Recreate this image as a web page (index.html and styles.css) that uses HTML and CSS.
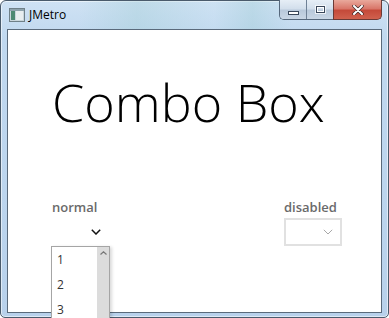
FILE: index.html
```html
<!DOCTYPE html>
<html lang="en">
<head>
    <meta charset="UTF-8">
    <title>JMetro</title>
    <link rel="stylesheet" href="styles.css">
</head>
<body>
    <div class="window">
        <div class="titlebar">
            <svg class="app-icon" width="16" height="14" viewBox="0 0 16 14">
                <rect x="0.5" y="0.5" width="15" height="13" fill="#c9d6dc" stroke="#6f8088"/>
                <rect x="2" y="3" width="4" height="9" fill="#4d8a73"/>
                <rect x="7" y="3" width="7" height="9" fill="#e8eef0"/>
                <rect x="1" y="1" width="14" height="2" fill="#8ea3ad"/>
            </svg>
            <span class="title">JMetro</span>
            <div class="controls">
                <div class="ctl-group">
                    <div class="ctl min"><span class="min-glyph"></span></div>
                    <div class="ctl max"><span class="max-glyph"></span></div>
                </div>
                <div class="ctl close">
                    <svg width="12" height="10" viewBox="0 0 12 10">
                        <path d="M2 1 L10 9 M10 1 L2 9" stroke="#3b2a2a" stroke-width="3.4" stroke-linecap="round"/>
                        <path d="M2 1 L10 9 M10 1 L2 9" stroke="#fff" stroke-width="2" stroke-linecap="round"/>
                    </svg>
                </div>
            </div>
        </div>

        <div class="client">
            <h1 class="heading">Combo Box</h1>

            <div class="combo-row">
                <div class="combo-col">
                    <div class="label">normal</div>
                    <div class="combo">
                        <svg class="chevron" width="10" height="6" viewBox="0 0 10 6">
                            <path d="M0.8 0.8 L5 5 L9.2 0.8" fill="none" stroke="#111" stroke-width="1.5"/>
                        </svg>
                        <div class="popup">
                            <ul class="items">
                                <li>1</li>
                                <li>2</li>
                                <li>3</li>
                            </ul>
                            <div class="scrollbar">
                                <svg width="7" height="4" viewBox="0 0 7 4">
                                    <path d="M0.5 3.5 L3.5 0.8 L6.5 3.5" fill="none" stroke="#777" stroke-width="1.2"/>
                                </svg>
                            </div>
                        </div>
                    </div>
                </div>
                <div class="combo-col">
                    <div class="label">disabled</div>
                    <div class="combo disabled">
                        <svg class="chevron" width="10" height="6" viewBox="0 0 10 6">
                            <path d="M0.8 0.8 L5 5 L9.2 0.8" fill="none" stroke="#a8a8a8" stroke-width="1"/>
                        </svg>
                    </div>
                </div>
            </div>
        </div>
    </div>
</body>
</html>
```

FILE: styles.css
```css
body {
    margin: 0;
    width: 389px;
    height: 318px;
    overflow: hidden;
    font-family: "Open Sans", "Noto Sans", sans-serif;
    background: #fff;
}
.window {
    position: relative;
    box-sizing: border-box;
    height: 318px;
    display: flex;
    flex-direction: column;
    border: 1px solid #4a5b6c;
    border-radius: 6px 6px 5px 5px;
    background: linear-gradient(to bottom, #cfe2f4 0%, #c0d8ef 12%, #bcd5ee 60%, #b8d1eb 100%);
    box-shadow: inset 0 0 0 1px rgba(255, 255, 255, 0.55);
}
.titlebar {
    height: 28px;
    display: flex;
    align-items: center;
    padding-left: 8px;
    background: linear-gradient(to right, rgba(210, 230, 240, 0) 20%, rgba(160, 205, 210, 0.35) 35%, rgba(200, 225, 240, 0.2) 55%, rgba(150, 200, 205, 0.3) 65%, rgba(210, 230, 245, 0) 75%);
    border-radius: 5px 5px 0 0;
}
.app-icon {
    margin-top: -1px;
}
.title {
    font-size: 12px;
    color: #000;
    margin-left: 4px;
    margin-top: -1px;
}
.controls {
    margin-left: auto;
    margin-right: 6px;
    align-self: flex-start;
    margin-top: -1px;
    display: flex;
    height: 20px;
}
.ctl-group {
    display: flex;
    border: 1px solid #56687c;
    border-top: none;
    border-right: none;
    border-radius: 0 0 0 5px;
    overflow: hidden;
}
.ctl {
    display: flex;
    align-items: center;
    justify-content: center;
    height: 19px;
}
.min, .max {
    width: 26px;
    background: linear-gradient(to bottom, #e6eef6 0%, #d3dfec 45%, #b9c9db 55%, #c9d6e5 100%);
}
.min {
    border-right: 1px solid #6f8196;
}
.min-glyph {
    width: 9px;
    height: 2px;
    margin-top: 6px;
    background: #fff;
    border: 1px solid #39475a;
}
.max-glyph {
    width: 7px;
    height: 5px;
    border: 1px solid #39475a;
    box-shadow: inset 0 0 0 1px #fff, 0 0 0 1px rgba(255, 255, 255, 0.7);
}
.close {
    width: 47px;
    background: linear-gradient(to bottom, #e9a99c 0%, #d9776a 45%, #c54a3a 55%, #d0614e 100%);
    border: 1px solid #6b3a36;
    border-top: none;
    border-radius: 0 0 5px 0;
}
.client {
    flex: 1;
    margin: 0 6px 4px;
    border: 1px solid #5a6a7b;
    background: #fff;
    padding: 46px 39px 0 44px;
}
.heading {
    margin: 0;
    font-size: 52px;
    font-weight: 300;
    line-height: 52px;
    color: #000;
}
.combo-row {
    display: flex;
    justify-content: space-between;
    margin-top: 70px;
}
.label {
    font-size: 13px;
    font-weight: 600;
    color: #6a6a6a;
    line-height: 18px;
    margin-bottom: 2px;
}
.combo {
    position: relative;
    box-sizing: border-box;
    width: 58px;
    height: 28px;
    border: 2px solid transparent;
    display: flex;
    align-items: center;
    justify-content: flex-end;
    padding-right: 7px;
}
.combo.disabled {
    border-color: #e1e1e1;
}
.popup {
    position: absolute;
    left: -3px;
    top: 26px;
    width: 59px;
    height: 72px;
    box-sizing: border-box;
    background: #fff;
    border: 1px solid #a5a5a5;
    border-bottom: none;
    display: flex;
    overflow: hidden;
    box-shadow: 2px 1px 3px rgba(0, 0, 0, 0.15);
}
.items {
    list-style: none;
    margin: 0;
    padding: 0 0 0 5px;
    flex: 1;
}
.items li {
    height: 25px;
    line-height: 25px;
    font-size: 12px;
    color: #333;
}
.scrollbar {
    width: 12px;
    background: #dcdcdc;
    display: flex;
    justify-content: center;
    padding-top: 4px;
    box-sizing: border-box;
}
```
